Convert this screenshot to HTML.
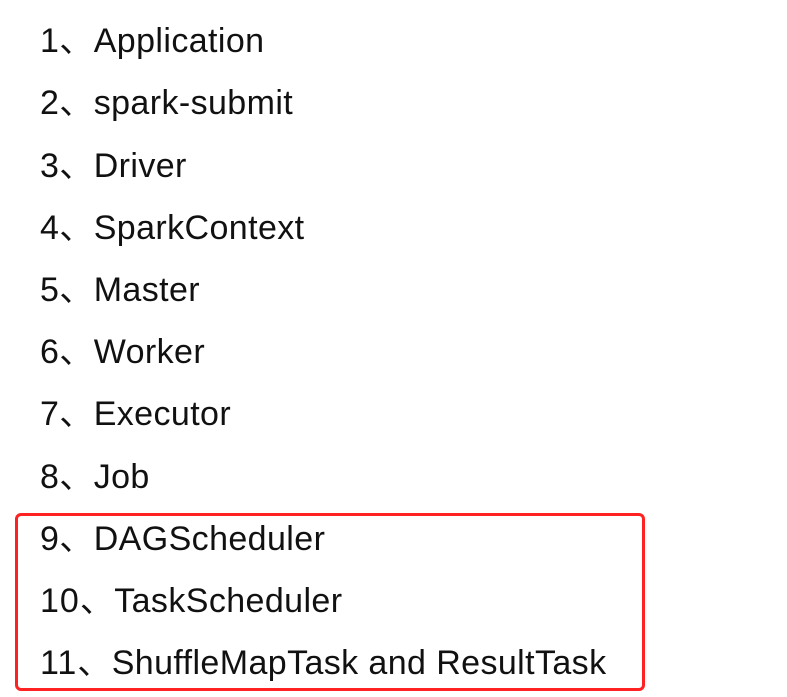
<!DOCTYPE html>
<html><head><meta charset="utf-8"><style>
html,body{margin:0;padding:0;background:#fff;width:787px;height:697px;overflow:hidden}
.l{position:absolute;left:40px;height:62px;line-height:62px;font-size:34px;color:#111;font-family:"Liberation Sans","Noto Sans CJK SC",sans-serif;white-space:nowrap;letter-spacing:0.4px}
.n{letter-spacing:1px}
.box{position:absolute;left:15px;top:513px;width:624px;height:172px;border:3px solid #f22;border-radius:6px}
</style></head><body>
<div class="l" style="top:10px">1、Application</div>
<div class="l" style="top:72px">2、spark-submit</div>
<div class="l" style="top:135px">3、Driver</div>
<div class="l" style="top:197px">4、SparkContext</div>
<div class="l" style="top:259px">5、Master</div>
<div class="l" style="top:321px">6、Worker</div>
<div class="l" style="top:383px">7、Executor</div>
<div class="l" style="top:446px">8、Job</div>
<div class="l" style="top:508px">9、DAGScheduler</div>
<div class="l" style="top:570px"><span class="n">10</span>、TaskScheduler</div>
<div class="l" style="top:632px"><span class="n">11</span>、ShuffleMapTask and ResultTask</div>
<div class="box"></div>
</body></html>
